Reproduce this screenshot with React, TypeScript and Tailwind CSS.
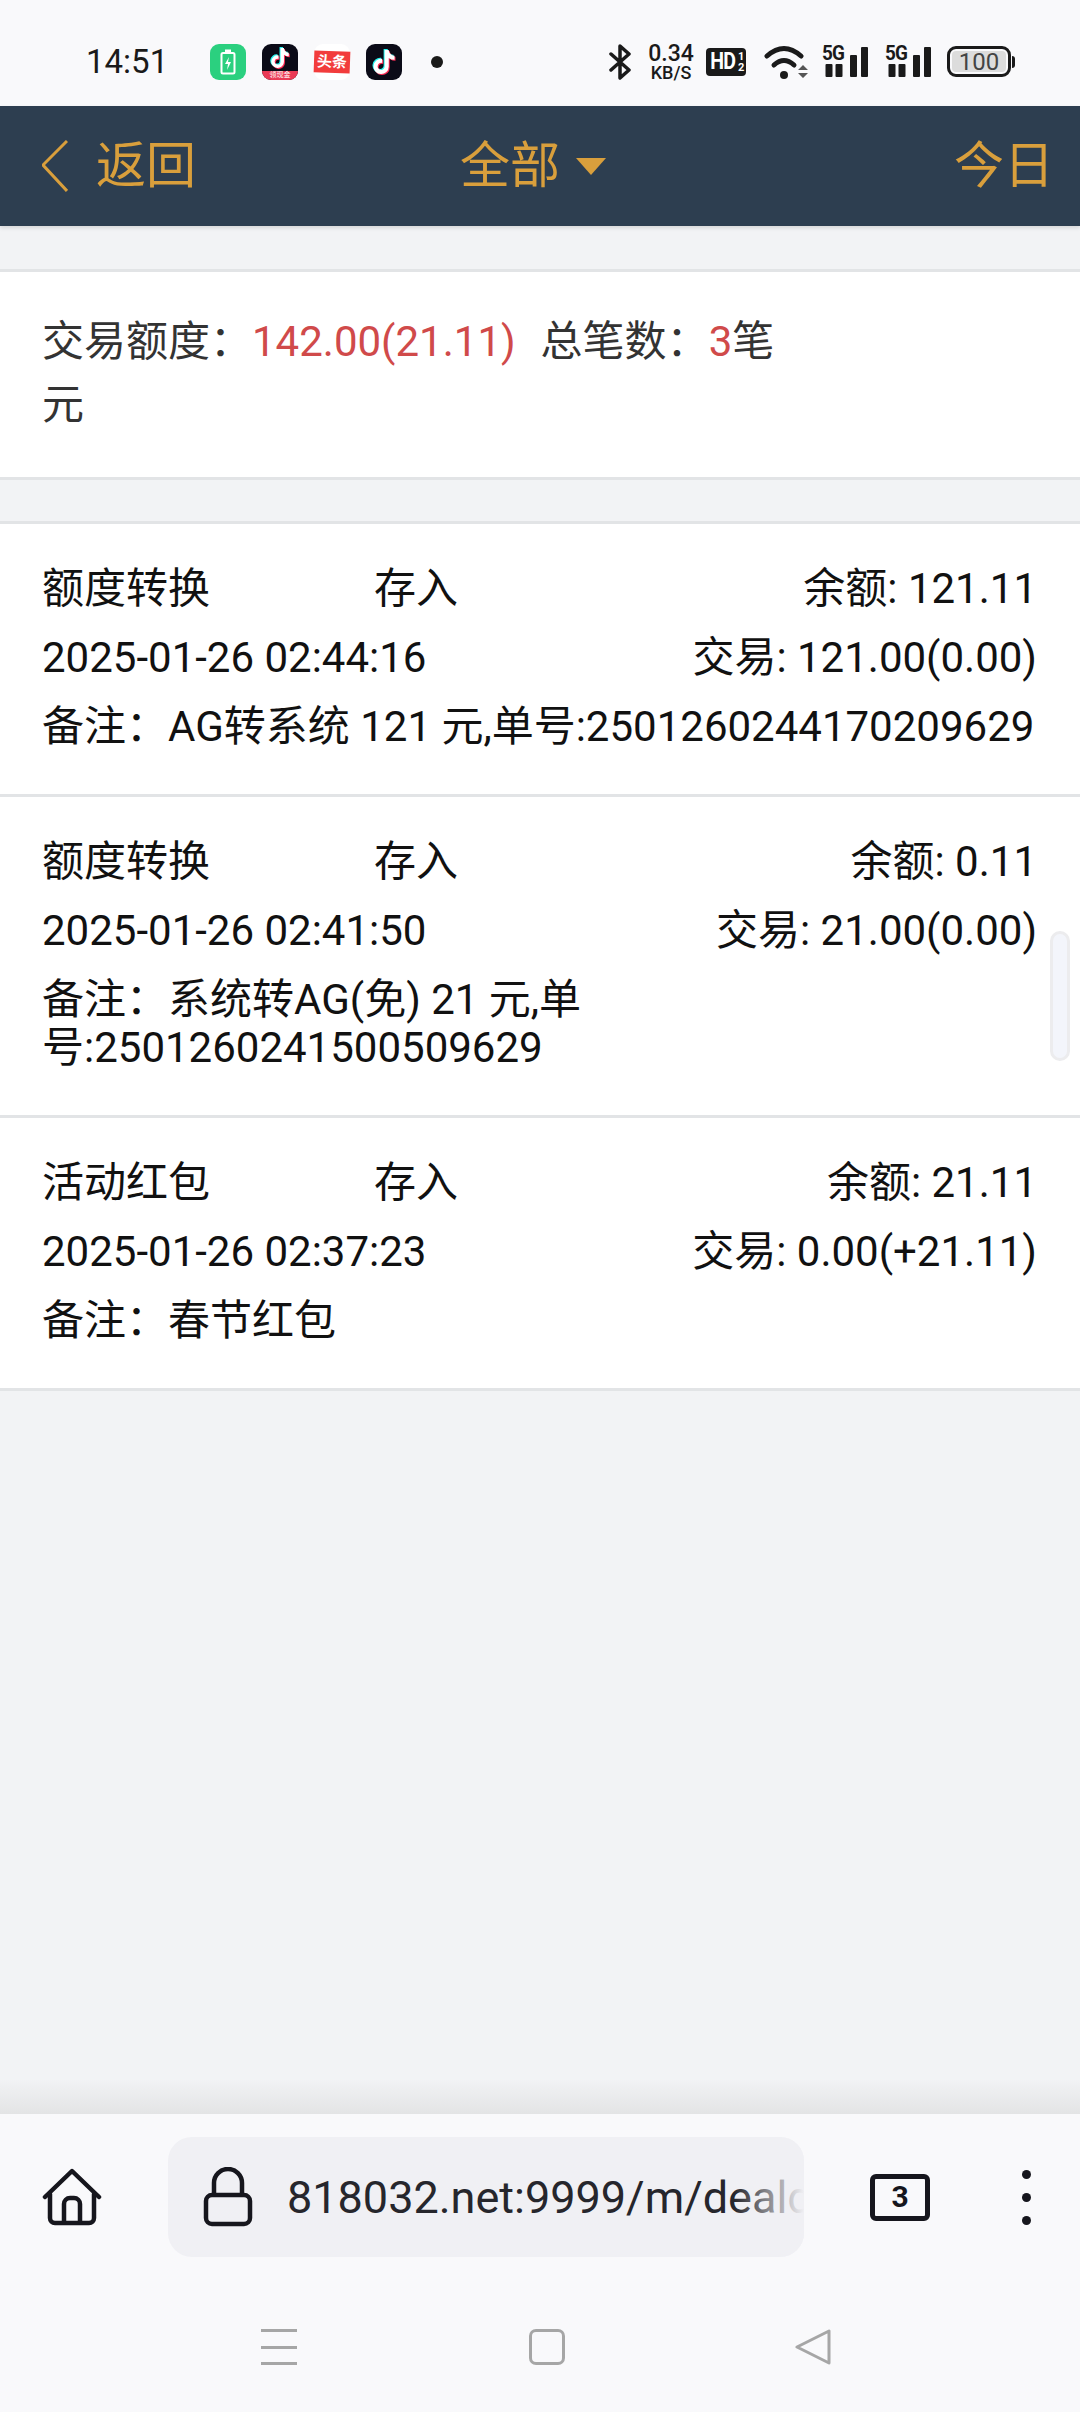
import type { ReactNode } from "react";
import { FaTiktok } from "react-icons/fa6";

function TikTokMark({ size, className = "" }: { size: number; className?: string }) {
  return (
    <div className={`relative ${className}`} style={{ width: size, height: size }}>
      <FaTiktok size={size} className="absolute left-[-1px] top-[-1px] text-[#25f4ee]" />
      <FaTiktok size={size} className="absolute left-[1px] top-[1px] text-[#fe2c55]" />
      <FaTiktok size={size} className="absolute left-0 top-0 text-white" />
    </div>
  );
}

function NetworkBars() {
  return (
    <div className="relative h-[30px] w-[46px] text-[#1a1a1a]">
      <span className="absolute left-0 top-[-5px] origin-left scale-x-90 text-[21px] font-bold leading-[22px] tracking-[-1px]">5G</span>
      <svg width="46" height="30" viewBox="0 0 46 30" className="absolute left-0 top-0" fill="currentColor">
        <rect x="3.5" y="17" width="7" height="13" rx="1" />
        <rect x="13.5" y="17" width="7" height="13" rx="1" />
        <rect x="28" y="8" width="7" height="22" rx="1" />
        <rect x="39" y="0" width="7" height="30" rx="1" />
      </svg>
    </div>
  );
}

function StatusBar() {
  return (
    <div className="flex h-[106px] shrink-0 items-center bg-[#f9f9fb] pt-[17px] text-[#1a1a1a]">
      <span className="ml-[86px] w-[124px] text-[33px] leading-none">14:51</span>

      {/* notification icons */}
      <div className="flex h-[36px] w-[36px] items-center justify-center rounded-[9px] bg-[#2bd07f]">
        <svg width="16" height="26" viewBox="0 0 16 26" fill="none">
          <rect x="1.5" y="4" width="13" height="20.5" rx="1.5" stroke="white" strokeWidth="2" />
          <rect x="5" y="0.5" width="6" height="3" fill="white" />
          <path d="M9 8 5 15h3l-1 6 4-8H8z" fill="white" />
        </svg>
      </div>
      <div className="relative ml-[16px] flex h-[36px] w-[36px] justify-center overflow-hidden rounded-[9px] bg-[#0b0b17] pt-[4px]">
        <TikTokMark size={20} />
        <div className="absolute bottom-0 left-0 right-0 flex h-[9px] items-center justify-center bg-[#ea3a55] text-[7px] leading-none text-white">领现金</div>
      </div>
      <div className="ml-[16px] flex h-[36px] w-[36px] items-center justify-center rounded-[9px] bg-white">
        <span className="flex h-[22px] w-[36px] rotate-[2deg] items-center justify-center bg-[#f23c3c] text-[15px] font-bold leading-none text-white">头条</span>
      </div>
      <div className="ml-[16px] flex h-[36px] w-[36px] items-center justify-center rounded-[9px] bg-[#0b0b17]">
        <TikTokMark size={24} />
      </div>
      <div className="ml-[29px] h-[12px] w-[12px] rounded-full bg-[#1a1a1a]" />

      {/* system indicators */}
      <svg width="22" height="36" viewBox="0 0 22 36" className="ml-[166px]" fill="none" stroke="#1a1a1a" strokeWidth="3.5" strokeLinejoin="round" strokeLinecap="round">
        <path d="M2 10 20 26l-9 8V2l9 8L2 26" />
      </svg>
      <div className="ml-[13px] flex w-[54px] flex-col items-center">
        <span className="text-[23px] font-medium leading-[21px]">0.34</span>
        <span className="text-[18px] font-medium leading-[17px]">KB/S</span>
      </div>
      <div className="ml-[8px] flex h-[28px] w-[40px] items-center justify-center gap-[1px] rounded-[4px] bg-[#1a1a1a] text-white">
        <span className="scale-x-85 text-[23px] font-bold leading-none tracking-[-1px]">HD</span>
        <span className="flex flex-col text-[11px] font-bold leading-[11px]"><span>1</span><span>2</span></span>
      </div>
      <svg width="44" height="34" viewBox="0 0 44 34" className="ml-[18px]" fill="none" stroke="#1a1a1a" strokeWidth="5" strokeLinecap="round">
        <path d="M3 11Q20-4 37 11" />
        <path d="M10 20Q20 11 30 20" />
        <circle cx="20" cy="30" r="4" fill="#1a1a1a" stroke="none" />
        <path d="m34 25 5-5 5 5zM34 28l5 5 5-5z" fill="#555" stroke="none" />
      </svg>
      <div className="ml-[14px]"><NetworkBars /></div>
      <div className="ml-[17px]"><NetworkBars /></div>
      <div className="ml-[16px] flex items-center">
        <div className="flex h-[31px] w-[64px] items-center justify-center rounded-[9px] border-[3px] border-[#1a1a1a] p-[2px]">
          <span className="flex h-full w-full items-center justify-center rounded-[4px] bg-[#dcdcdc] text-[24px] leading-none text-[#444]">100</span>
        </div>
        <div className="ml-[1px] h-[12px] w-[3px] rounded-r bg-[#1a1a1a]" />
      </div>
    </div>
  );
}

function Header() {
  return (
    <header className="z-10 flex h-[120px] shrink-0 items-center bg-[#2d3e50] pl-[42px] pr-[26px] text-[50px] leading-none text-[#d99f3c] shadow-[0_2px_4px_rgba(0,0,0,0.12)]">
      <div className="flex w-[418px] items-center">
        <svg width="26" height="52" viewBox="0 0 26 52" fill="none" stroke="currentColor" strokeWidth="3">
          <path d="M25 1 1 25l24 26" />
        </svg>
        <span className="ml-[28px]">返回</span>
      </div>
      <div className="flex items-center">
        <span>全部</span>
        <svg width="30" height="18" viewBox="0 0 30 18" className="ml-[16px]" fill="currentColor">
          <path d="M0 1h30L15 18z" />
        </svg>
      </div>
      <span className="ml-auto">今日</span>
    </header>
  );
}

type Deal = {
  kind: string;
  balance: string;
  time: string;
  amount: string;
  note: ReactNode;
};

const deals: Deal[] = [
  {
    kind: "额度转换",
    balance: "余额: 121.11",
    time: "2025-01-26 02:44:16",
    amount: "交易: 121.00(0.00)",
    note: "备注：AG转系统 121 元,单号:2501260244170209629",
  },
  {
    kind: "额度转换",
    balance: "余额: 0.11",
    time: "2025-01-26 02:41:50",
    amount: "交易: 21.00(0.00)",
    note: (
      <>
        备注：系统转AG(免) 21 元,单<br />号:2501260241500509629
      </>
    ),
  },
  {
    kind: "活动红包",
    balance: "余额: 21.11",
    time: "2025-01-26 02:37:23",
    amount: "交易: 0.00(+21.11)",
    note: "备注：春节红包",
  },
];

function DealRow({ deal }: { deal: Deal }) {
  return (
    <div className="flex flex-col gap-[21px] border-b-[3px] border-[#e2e4e6] bg-white pb-[43px] pl-[42px] pr-[43px] pt-[41px] text-[42px] leading-[48px] text-[#111]">
      <div className="flex">
        <span className="w-[332px]">{deal.kind}</span>
        <span>存入</span>
        <span className="ml-auto">{deal.balance}</span>
      </div>
      <div className="flex justify-between">
        <span>{deal.time}</span>
        <span>{deal.amount}</span>
      </div>
      <div className="whitespace-nowrap">{deal.note}</div>
    </div>
  );
}

function Toolbar() {
  return (
    <footer className="relative z-10 flex h-[298px] shrink-0 flex-col bg-[#f9f9fb]">
      <div className="mt-[23px] flex h-[120px] items-center">
        <svg width="60" height="58" viewBox="0 0 60 58" className="ml-[42px]" fill="none" stroke="#16161d" strokeWidth="4.5" strokeLinecap="round" strokeLinejoin="round">
          <path d="M3 29 30 3l27 26" />
          <path d="M8 26v24a5 5 0 0 0 5 5h34a5 5 0 0 0 5-5V26" />
          <path d="M22 54V36a6 6 0 0 1 6-6h4a6 6 0 0 1 6 6v18" />
        </svg>
        <div className="relative ml-[66px] flex h-[120px] w-[636px] items-center overflow-hidden rounded-[24px] bg-[#f0f0f4]">
          <svg width="50" height="60" viewBox="0 0 50 60" className="ml-[35px] shrink-0" fill="none" stroke="#16161d" strokeWidth="4.5" strokeLinejoin="round">
            <path d="M11 28V16a14 14 0 0 1 28 0v12" />
            <rect x="3" y="28" width="44" height="29" rx="6" />
          </svg>
          <span className="ml-[34px] whitespace-nowrap text-[45px] leading-none text-[#26262c]">818032.net:9999/m/deald</span>
          <div className="absolute bottom-0 right-0 top-0 w-[70px] bg-gradient-to-r from-transparent to-[#f0f0f4]" />
        </div>
        <div className="ml-[66px] flex h-[47px] w-[60px] items-center justify-center rounded-[6px] border-[5px] border-[#16161d] text-[30px] font-bold leading-none text-[#16161d]">3</div>
        <div className="ml-[92px] flex flex-col gap-[14px]">
          <span className="h-[9px] w-[9px] rounded-full bg-[#16161d]" />
          <span className="h-[9px] w-[9px] rounded-full bg-[#16161d]" />
          <span className="h-[9px] w-[9px] rounded-full bg-[#16161d]" />
        </div>
      </div>
      {/* system navigation keys */}
      <div className="mt-[72px] flex h-[36px] items-center">
        <div className="ml-[261px] flex h-[36px] w-[36px] flex-col justify-between">
          <span className="h-[3px] bg-[#a6a6a6]" />
          <span className="h-[3px] bg-[#a6a6a6]" />
          <span className="h-[3px] bg-[#a6a6a6]" />
        </div>
        <div className="ml-[232px] h-[36px] w-[36px] rounded-[7px] border-[3px] border-[#a6a6a6]" />
        <svg width="36" height="36" viewBox="0 0 36 36" className="ml-[230px]" fill="none" stroke="#a6a6a6" strokeWidth="3" strokeLinejoin="round">
          <path d="M34 2v32L2 18z" />
        </svg>
      </div>
    </footer>
  );
}

export default function App() {
  return (
    <div className="flex h-[2412px] w-[1080px] flex-col overflow-hidden bg-[#f2f3f5] font-['Roboto','Noto_Sans_CJK_SC',sans-serif]">
      <StatusBar />
      <Header />
      <main className="relative flex-1 pt-[43px]">
        <section className="border-y-[3px] border-[#e2e4e6] bg-white pb-[41px] pl-[42px] pr-[43px] pt-[38px] text-[42px] leading-[63px] text-[#333]">
          <p className="w-[800px]">
            交易额度：<span className="text-[#d04a4a]">142.00(21.11)</span>
            <span className="ml-[25px]">总笔数：</span>
            <span className="text-[#d04a4a]">3</span>笔
            <br />元
          </p>
        </section>
        <section className="mt-[41px] border-t-[3px] border-[#e2e4e6]">
          {deals.map((deal) => (
            <DealRow key={deal.time} deal={deal} />
          ))}
        </section>

        {/* overlay scroll thumb */}
        <div className="absolute left-[1050px] top-[705px] h-[130px] w-[20px] rounded-full border-[3px] border-[#ececee] bg-[#f3f5fb]" />
        {/* shade cast by the toolbar */}
        <div className="absolute bottom-0 left-0 right-0 h-[35px] bg-gradient-to-b from-transparent to-[#e3e4e5]" />
      </main>
      <Toolbar />
    </div>
  );
}
